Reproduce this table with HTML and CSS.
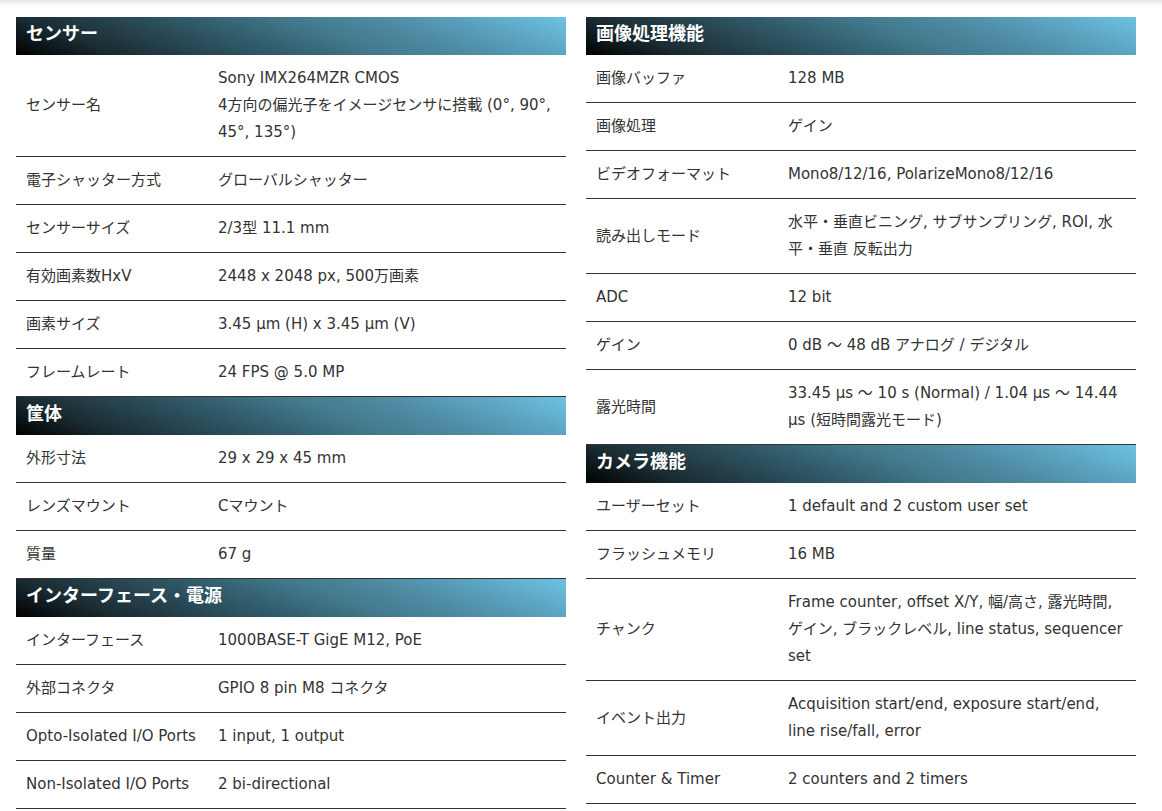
FILE: index.html
```html
<!DOCTYPE html>
<html lang="ja">
<head>
<meta charset="utf-8">
<link rel="stylesheet" href="styles.css">
</head>
<body>
<div class="topshade"></div>
<main class="page">
  <div class="col">
    <section class="sec">
      <h2 class="sec-head">センサー</h2>
      <div class="row"><div class="k">センサー名</div><div class="v">Sony IMX264MZR CMOS<br>4方向の偏光子をイメージセンサに搭載 (0°, 90°, 45°, 135°)</div></div>
      <div class="row"><div class="k">電子シャッター方式</div><div class="v">グローバルシャッター</div></div>
      <div class="row"><div class="k">センサーサイズ</div><div class="v">2/3型 11.1 mm</div></div>
      <div class="row"><div class="k">有効画素数HxV</div><div class="v">2448 x 2048 px, 500万画素</div></div>
      <div class="row"><div class="k">画素サイズ</div><div class="v">3.45 µm (H) x 3.45 µm (V)</div></div>
      <div class="row"><div class="k">フレームレート</div><div class="v">24 FPS @ 5.0 MP</div></div>
    </section>
    <section class="sec">
      <h2 class="sec-head">筐体</h2>
      <div class="row"><div class="k">外形寸法</div><div class="v">29 x 29 x 45 mm</div></div>
      <div class="row"><div class="k">レンズマウント</div><div class="v">Cマウント</div></div>
      <div class="row"><div class="k">質量</div><div class="v">67 g</div></div>
    </section>
    <section class="sec">
      <h2 class="sec-head">インターフェース・電源</h2>
      <div class="row"><div class="k">インターフェース</div><div class="v">1000BASE-T GigE M12, PoE</div></div>
      <div class="row"><div class="k">外部コネクタ</div><div class="v">GPIO 8 pin M8 コネクタ</div></div>
      <div class="row"><div class="k">Opto-Isolated I/O Ports</div><div class="v">1 input, 1 output</div></div>
      <div class="row"><div class="k">Non-Isolated I/O Ports</div><div class="v">2 bi-directional</div></div>
    </section>
  </div>
  <div class="col">
    <section class="sec">
      <h2 class="sec-head">画像処理機能</h2>
      <div class="row"><div class="k">画像バッファ</div><div class="v">128 MB</div></div>
      <div class="row"><div class="k">画像処理</div><div class="v">ゲイン</div></div>
      <div class="row"><div class="k">ビデオフォーマット</div><div class="v">Mono8/12/16, PolarizeMono8/12/16</div></div>
      <div class="row"><div class="k">読み出しモード</div><div class="v">水平・垂直ビニング, サブサンプリング, ROI, 水平・垂直 反転出力</div></div>
      <div class="row"><div class="k">ADC</div><div class="v">12 bit</div></div>
      <div class="row"><div class="k">ゲイン</div><div class="v">0 dB ～ 48 dB アナログ / デジタル</div></div>
      <div class="row"><div class="k">露光時間</div><div class="v">33.45 µs ～ 10 s (Normal) / 1.04 µs ～ 14.44 µs (短時間露光モード)</div></div>
    </section>
    <section class="sec">
      <h2 class="sec-head">カメラ機能</h2>
      <div class="row"><div class="k">ユーザーセット</div><div class="v">1 default and 2 custom user set</div></div>
      <div class="row"><div class="k">フラッシュメモリ</div><div class="v">16 MB</div></div>
      <div class="row"><div class="k">チャンク</div><div class="v">Frame counter, offset X/Y, 幅/高さ, 露光時間, ゲイン, ブラックレベル, line status, sequencer set</div></div>
      <div class="row"><div class="k">イベント出力</div><div class="v">Acquisition start/end, exposure start/end, line rise/fall, error</div></div>
      <div class="row"><div class="k">Counter &amp; Timer</div><div class="v">2 counters and 2 timers</div></div>
    </section>
  </div>
</main>
</body>
</html>
```

FILE: styles.css
```css
html, body {
  margin: 0;
  padding: 0;
  background: #fff;
}
body {
  font-family: "DejaVu Sans", "Noto Sans CJK JP", sans-serif;
  font-size: 15px;
  color: #333;
  width: 1162px;
  height: 811px;
  overflow: hidden;
}
.topshade {
  height: 6px;
  background: linear-gradient(to bottom, #e6e6e6, #ffffff);
}
.page {
  display: grid;
  grid-template-columns: 550px 550px;
  column-gap: 20px;
  padding: 11px 0 0 16px;
  align-items: start;
}
.col {
  display: flex;
  flex-direction: column;
}
.sec-head {
  margin: 0;
  box-sizing: border-box;
  height: 38px;
  line-height: 30px;
  padding: 0 10px 8px;
  font-family: "Noto Sans CJK JP", "DejaVu Sans", sans-serif;
  font-size: 18px;
  font-weight: bold;
  color: #fff;
  background: linear-gradient(21deg, #000 0%, #1a2a31 15%, #325d6d 42%, #437a8d 57%, #4e8aa2 70%, #5ca5c2 85%, #6ec2e4 100%);
}
.row {
  display: grid;
  grid-template-columns: 192px 1fr;
  align-items: center;
  padding: 10px 10px;
  line-height: 27px;
  border-bottom: 1px solid #333;
}
.k, .v {
  min-width: 0;
}
```
